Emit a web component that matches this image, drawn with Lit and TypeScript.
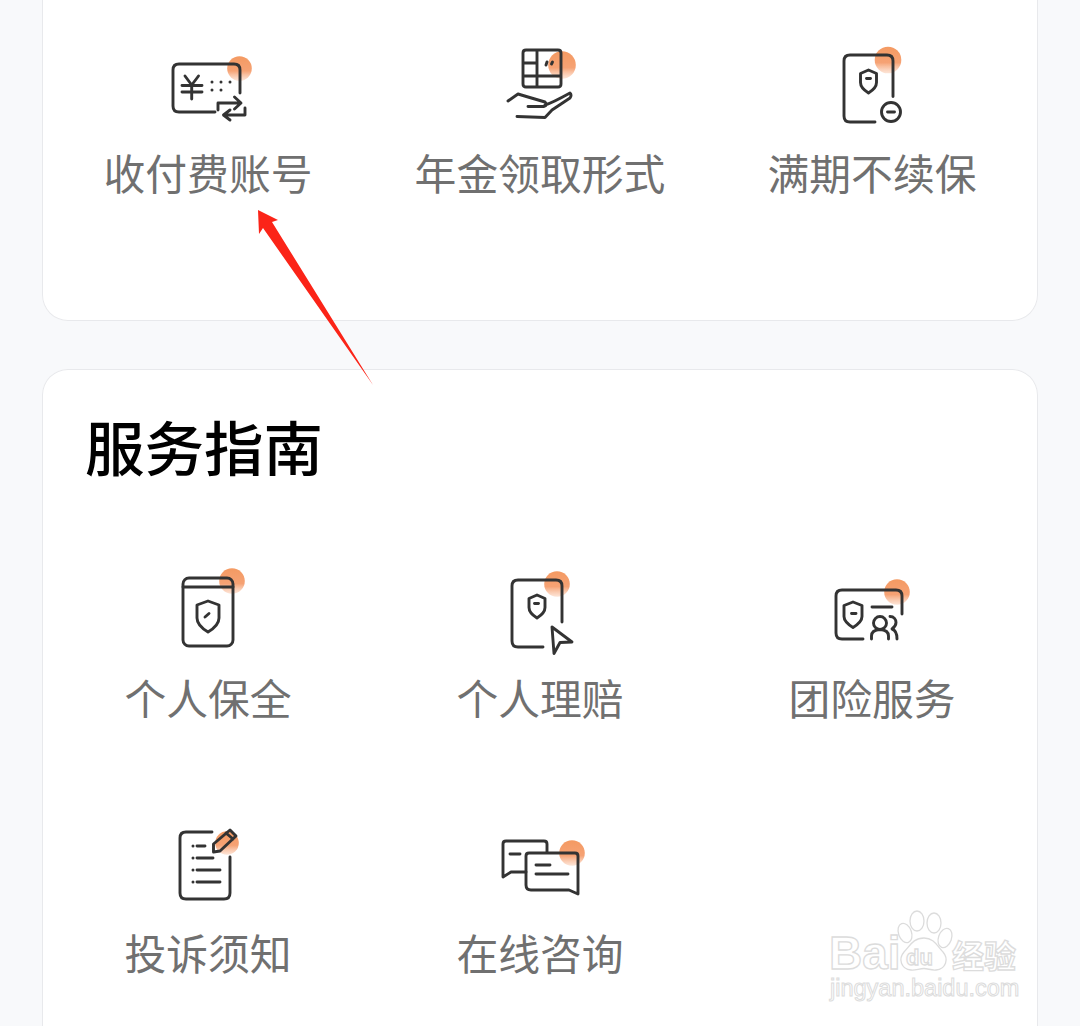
import { LitElement, html, svg, css } from 'lit'
import { customElement } from 'lit/decorators.js'

// icon paths are written in page coordinates, the viewBox maps them into the cell
const DOT = (id: string, x: number, y: number, r: number) => svg`
  <defs>
    <linearGradient id=${id} x1="0" y1="0" x2="0" y2="1">
      <stop offset="0" stop-color="#f49a62" />
      <stop offset="0.6" stop-color="#f6a274" />
      <stop offset="1" stop-color="#fbd3bc" stop-opacity="0.6" />
    </linearGradient>
  </defs>
  <circle class="dot" cx=${x} cy=${y} r=${r + 0.8} fill="url(#${id})" stroke="none" />
`

const dots = (pts: number[][]) =>
  pts.map(([x, y]) => svg`<circle cx=${x} cy=${y} r="1.5" fill="#333" stroke="none" />`)

const topItems = [
  {
    label: '收付费账号',
    cx: 208,
    top: 43,
    art: svg`
      ${DOT('d1', 239.5, 68.5, 11.5)}
      <path d="M215 112H179q-6 0-6-6V70q0-6 6-6h55q6 0 6 6v23" />
      <path d="M185 76l6.7 9 6.8-9M182 85.5h20M182 92h20M191.7 85.5V99" />
      ${dots([[212, 82], [221, 82], [230, 82], [212, 90], [221, 90]])}
      <path d="M218 110v-7h22M234.500 97l6.500 6-6.500 6" />
      <path d="M245 108v7h-21M230 110l-6.500 5 6.500 5" />
    `,
  },
  {
    label: '年金领取形式',
    cx: 540,
    top: 43,
    art: svg`
      ${DOT('d2', 562, 65, 13)}
      <path d="M526 50h32q3 0 3 3v31q0 3-3 3h-32q-3 0-3-3V53q0-3 3-3zM537 50v37M523 76h38M523 63h14" />
      <path d="M546 65l1-3M551.500 64l1-2" />
      <path d="M508 101l10-7 10 3 17 5q3 3-1 4.500h-16M545 105q7-2 25-12q2 2 0 5l-18 12-7 7.500-28-1" />
    `,
  },
  {
    label: '满期不续保',
    cx: 872,
    top: 43,
    art: svg`
      ${DOT('d3', 888, 60, 12.5)}
      <path d="M875 122h-25q-6 0-6-6V61q0-6 6-6h37q6 0 6 6v35.500" />
      <path d="M868.500 70l8 3.500v9c0 5-4 8-8 10.500c-4-2.500-8-5.500-8-10.500v-9z" />
      <path d="M866.500 78.500h4" />
      <circle cx="891" cy="112" r="9.500" />
      <path d="M887.500 112h7" />
    `,
  },
]

const guideItems = [
  {
    label: '个人保全',
    cx: 208,
    top: 568,
    art: svg`
      ${DOT('d4', 232, 581, 12)}
      <rect x="183" y="578" width="50" height="68" rx="6" />
      <path d="M183 587h50" />
      <path d="M208 601l11 4v13c0 7-6 11-11 14c-5-3-11-7-11-14v-13z" />
      <path d="M205 617l4-3.500" />
    `,
  },
  {
    label: '个人理赔',
    cx: 540,
    top: 568,
    art: svg`
      ${DOT('d5', 557, 584, 12)}
      <path d="M543 647h-25q-6 0-6-6v-55q0-6 6-6h38q6 0 6 6v36" />
      <path d="M537 595l8 3.500v9c0 5-4 8-8 10.500c-4-2.500-8-5.500-8-10.500v-9z" />
      <path d="M534.500 603.500h4" />
      <path d="M552 627l20 15-12 .5-6 11z" />
    `,
  },
  {
    label: '团险服务',
    cx: 872,
    top: 568,
    art: svg`
      ${DOT('d6', 897, 592, 12)}
      <path d="M863 639h-21q-6 0-6-6v-37q0-6 6-6h54q6 0 6 6v18" />
      <path d="M853 602l9 3.500v11c0 5-5 8.500-9 11c-4-2.500-9-6-9-11v-11z" />
      <path d="M851.500 613.500h4.500M872 607h20" />
      <circle cx="880" cy="623" r="6.500" />
      <path d="M871.500 639v-3q0-6 8.500-6.500q8.500.5 8.500 6.500v3" />
      <path d="M890 616.500c4 0 6 3 6 6c0 3-2 5-4 6.500c3 1 5 4 5 10" />
    `,
  },
  {
    label: '投诉须知',
    cx: 208,
    top: 823,
    art: svg`
      ${DOT('d7', 227, 843, 11)}
      <path d="M212 832h-26q-6 0-6 6v55q0 6 6 6h38q6 0 6-6v-36" />
      <path d="M197 846h8M197 858h16M197 870h23M197 882h23" />
      ${dots([[193, 846], [193, 858], [193, 870], [193, 882]])}
      <path d="M213.500 844L230 830l6 6-16 15-6.500 1zM226 833l7 6" />
    `,
  },
  {
    label: '在线咨询',
    cx: 540,
    top: 823,
    art: svg`
      ${DOT('d8', 572, 853, 12)}
      <path d="M547 852v-8q0-3-3-3h-38q-3 0-3 3v33l8-5h15" />
      <path d="M510 854h10" />
      <path d="M529 853h46q3 0 3 3v38l-9-4h-38q-5 0-5-5v-29q0-3 3-3z" />
      <path d="M536 865h14M536 874h32" />
    `,
  },
]

type Item = (typeof topItems)[number]

@customElement('app-root')
export class AppRoot extends LitElement {
  static styles = css`
    :host {
      display: block;
      position: relative;
      height: 1026px;
      overflow: hidden;
      background: #f8f9fb;
      font-family: 'Noto Sans CJK SC', 'Noto Sans', sans-serif;
    }

    .page {
      display: flex;
      flex-direction: column;
      gap: 48px;
      padding: 0 42px;
    }

    .card {
      background: #fff;
      box-shadow: inset 0 0 0 1px #e8e9ec;
      border-radius: 26px;
      box-sizing: border-box;
    }

    /* runs off the top of the shot */
    .card.first {
      height: 351px;
      margin-top: -30px;
      padding-top: 73px;
    }

    .card.second {
      height: 700px;
      padding-top: 41px;
    }

    h2 {
      margin: 0 0 88px;
      padding-left: 43px;
      font-size: 59.5px;
      line-height: 70px;
      font-weight: 500;
      color: #000;
    }

    .grid {
      display: grid;
      grid-template-columns: repeat(3, 1fr);
      row-gap: 98px;
    }

    .cell {
      display: flex;
      flex-direction: column;
      align-items: center;
      gap: 17px;
    }

    .cell svg {
      width: 100px;
      height: 84px;
      overflow: visible;
      fill: none;
      stroke: #333;
      stroke-width: 2.9;
      stroke-linecap: round;
      stroke-linejoin: round;
    }

    .dot {
      filter: blur(0.6px);
    }

    .label {
      font-size: 41.8px;
      line-height: 56px;
      color: #707070;
    }

    .arrow {
      position: absolute;
      left: 0;
      top: 0;
      width: 1080px;
      height: 1026px;
      pointer-events: none;
    }

    .arrow polygon {
      fill: #fb2418;
    }

    .mark text,
    .mark ellipse,
    .mark path {
      fill: #fff;
      stroke: #dcdcdc;
      stroke-width: 1.3;
    }

    .mark .big {
      font-family: 'Liberation Sans', sans-serif;
      font-size: 46px;
      font-weight: 700;
    }

    .mark .du {
      font-family: 'Liberation Sans', sans-serif;
      font-size: 22px;
      font-weight: 700;
    }

    .mark .cn {
      font-size: 32px;
      font-weight: 700;
    }

    .mark .url {
      font-family: 'Liberation Sans', sans-serif;
      font-size: 23.5px;
      stroke-width: 1;
    }
  `

  private cell(item: Item) {
    return html`
      <div class="cell">
        <svg viewBox="${item.cx - 50} ${item.top} 100 84">${item.art}</svg>
        <div class="label">${item.label}</div>
      </div>
    `
  }

  render() {
    return html`
      <div class="page">
        <section class="card first">
          <div class="grid">${topItems.map((i) => this.cell(i))}</div>
        </section>
        <section class="card second">
          <h2>服务指南</h2>
          <div class="grid">${guideItems.map((i) => this.cell(i))}</div>
        </section>
      </div>
      <svg class="arrow" viewBox="0 0 1080 1026">
        <polygon points="258,210 278,220 272,222 373,385 263,228 259,234" />
        <g class="mark">
          <text class="big" x="829" y="969">Bai</text>
          <ellipse cx="905" cy="933" rx="6.500" ry="10" transform="rotate(-20 905 933)" />
          <ellipse cx="917" cy="921" rx="7" ry="10" />
          <ellipse cx="934" cy="923" rx="7" ry="10" />
          <ellipse cx="945" cy="938" rx="6.500" ry="10" transform="rotate(20 945 938)" />
          <path d="M924 938c10 0 13 8 19 14c6 7 3 17-7 18c-5 .5-8-1.500-12-1.500c-5 0-8 2-13 1.500c-10-1-13-11-7-18c6-6 9-14 20-14z" />
          <text class="du" x="906" y="965">du</text>
          <text class="cn" x="952" y="968">经验</text>
          <text class="url" x="830" y="996">jingyan.baidu.com</text>
        </g>
      </svg>
    `
  }
}

declare global {
  interface HTMLElementTagNameMap {
    'app-root': AppRoot
  }
}
